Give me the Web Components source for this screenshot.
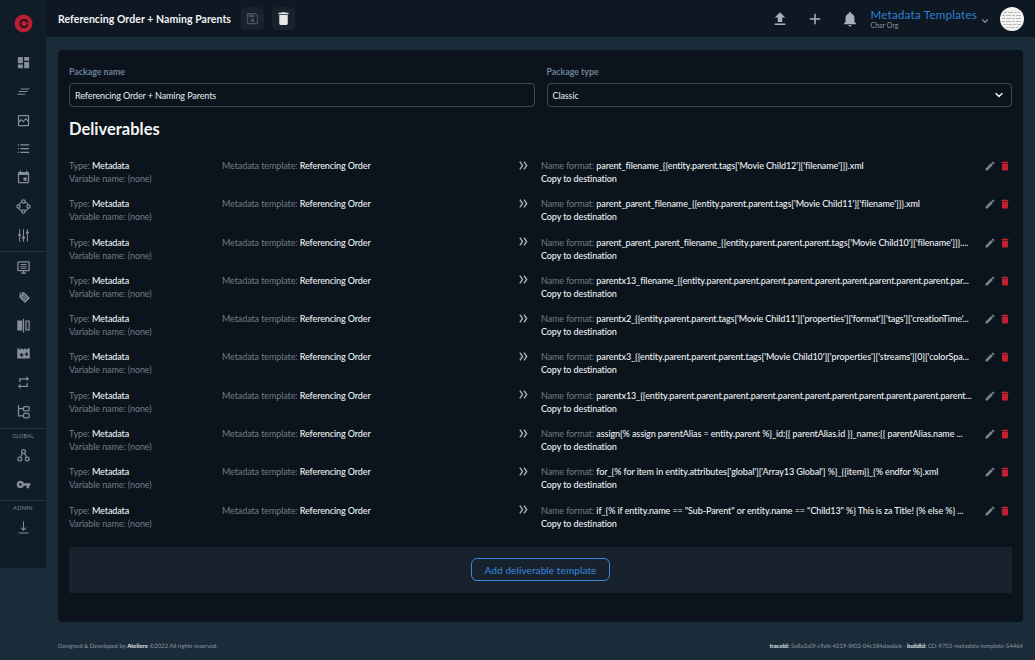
<!DOCTYPE html>
<html lang="en">
<head>
<meta charset="utf-8">
<title>Referencing Order + Naming Parents</title>
<style>
  html, body { margin: 0; height: 660px; overflow: hidden; background: #1a2b39; }
  body { font-family: "Lato", "Noto Sans", sans-serif; }
</style>
</head>
<body>
<app-shell>
  <side-nav slot="nav"></side-nav>
  <top-bar slot="top" title="Referencing Order + Naming Parents"></top-bar>
  <package-page></package-page>
  <page-footer slot="footer"></page-footer>
</app-shell>

<script>
const line = 'fill="none" stroke="currentColor" stroke-width="2"';
const icons = {
  dashboard: '<path d="M3 3h8v10H3zM13 3h8v6h-8zM13 11h8v10h-8zM3 15h8v6H3z"/>',
  stack: '<path d="M8 7h14l-1.2 1.6H6.6zM5 11.2h14l-1.2 1.6H3.6zM3 15.4h12l-1.2 1.6H1.6z"/>',
  image: '<path d="M19 3H5a2 2 0 0 0-2 2v14a2 2 0 0 0 2 2h14a2 2 0 0 0 2-2V5a2 2 0 0 0-2-2zm0 16H5v-3.6l3.5-3.4 3.5 3 3.5-4.5 3.5 3.6zm0-7.7-3.6-3.6-3.6 4.6-3.4-2.9L5 12.5V5h14z"/>',
  list: '<path d="M3 5h2v2H3zM7 5h14v2H7zM3 11h2v2H3zM7 11h14v2H7zM3 17h2v2H3zM7 17h14v2H7z"/>',
  event: '<path d="M17 12h-5v5h5v-5zM16 1v2H8V1H6v2H5c-1.11 0-1.99.9-1.99 2L3 19c0 1.1.89 2 2 2h14c1.1 0 2-.9 2-2V5c0-1.1-.9-2-2-2h-1V1h-2zm3 18H5V8h14v11z"/>',
  nodes: `<g ${line}><circle cx="12" cy="12" r="7.5"/></g><g stroke="currentColor" stroke-width="2" fill="#101c27"><circle cx="12" cy="4" r="2.6"/><circle cx="12" cy="20" r="2.6"/><circle cx="4" cy="12" r="2.6"/><circle cx="20" cy="12" r="2.6"/></g>`,
  tune: '<path d="M5 2h1.6v8H8v2.6H6.6V22H5v-9.4H3.4V10H5zM11.2 2h1.6v12h1.6v2.6h-1.6V22h-1.6v-5.4H9.6V14h1.6zM17.4 2H19v4h1.6v2.6H19V22h-1.6V8.6h-1.6V6h1.6z"/>',
  monitor: '<path fill-rule="evenodd" d="M20 2H4a2 2 0 0 0-2 2v12a2 2 0 0 0 2 2h7v2H8v2h8v-2h-3v-2h7a2 2 0 0 0 2-2V4a2 2 0 0 0-2-2zm0 14H4V4h16zM7 6.5h10v1.4H7zM7 9.5h10v1.4H7zM7 12.5h10v1.4H7z"/>',
  tag: '<path fill-rule="evenodd" transform="rotate(45 12 12)" d="M3.5 12 8 6.5h13v11H8zM7.3 10.8a1.3 1.3 0 1 0 0 2.4 1.3 1.3 0 0 0 0-2.4zM11 8.5v7h1v-7zM14 8.5v7h1v-7zM17 8.5v7h1v-7z"/>',
  compare: '<path fill-rule="evenodd" d="M2 4h8v16H2zM11 1h2v22h-2zM15 4h7v16h-7zm2 2v12h3V6z"/>',
  movie: '<path fill-rule="evenodd" d="M2 4h3l1.5 2.5L8 4h2l1.5 2.5L13 4h2l1.5 2.5L18 4h4v16H2zm6 7v2H6v2h2v2h2v-2h2v-2h-2v-2zm8-1v2h-2v2h2v2h2v-2h1v-2h-1v-2z"/>',
  repeat: '<path d="M7 7h10v3l4-4-4-4v3H5v6h2V7zm10 10H7v-3l-4 4 4 4v-3h12v-6h-2v4z"/>',
  tree: `<g ${line}><path d="M4 2v17h8M4 7.5h8"/><rect x="12" y="4" width="9" height="7" rx="2"/><rect x="12" y="15" width="9" height="7" rx="2"/></g>`,
  hub: `<g ${line}><path d="M10.5 8.5 7.5 14M13.5 8.5l3 5.5"/><circle cx="12" cy="5.5" r="3"/><circle cx="6" cy="17.5" r="3"/><circle cx="18" cy="17.5" r="3"/></g>`,
  key: '<path d="M12.65 10C11.83 7.67 9.61 6 7 6c-3.31 0-6 2.69-6 6s2.69 6 6 6c2.61 0 4.83-1.67 5.65-4H17v4h4v-4h2v-4H12.65zM7 14c-1.1 0-2-.9-2-2s.9-2 2-2 2 .9 2 2-.9 2-2 2z"/>',
  download: '<path d="M11.2 2h1.6v12.4l2.8-2.8 1.1 1.1-4.7 4.7-4.7-4.7 1.1-1.1 2.8 2.8zM4 20h16v1.6H4z"/>',
  upload: '<path d="M9 16h6v-6h4l-7-7-7 7h4zm-4 2h14v2H5z"/>',
  add: '<path d="M19 13h-6v6h-2v-6H5v-2h6V5h2v6h6v2z"/>',
  bell: '<path d="M12 22c1.1 0 2-.9 2-2h-4c0 1.1.9 2 2 2zm6-6v-5c0-3.07-1.63-5.64-4.5-6.32V4c0-.83-.67-1.5-1.5-1.5s-1.5.67-1.5 1.5v.68C7.64 5.36 6 7.92 6 11v5l-2 2v1h16v-1l-2-2z"/>',
  save: '<path d="M17 3H5c-1.11 0-2 .9-2 2v14c0 1.1.89 2 2 2h14c1.1 0 2-.9 2-2V7l-4-4zm2 16H5V5h11.17L19 7.83V19zm-7-7c-1.66 0-3 1.34-3 3s1.34 3 3 3 3-1.34 3-3-1.34-3-3-3zM6 6h9v4H6z"/>',
  trash: '<path d="M6 19c0 1.1.9 2 2 2h8c1.1 0 2-.9 2-2V7H6v12zM19 4h-3.5l-1-1h-5l-1 1H5v2h14V4z"/>',
  edit: '<path d="M3 17.25V21h3.75L17.81 9.94l-3.75-3.75L3 17.25zM20.71 7.04c.39-.39.39-1.02 0-1.41l-2.34-2.34c-.39-.39-1.02-.39-1.41 0l-1.83 1.83 3.75 3.75 1.83-1.83z"/>',
  chevron: '<path d="M6 9l6 6 6-6" fill="none" stroke="currentColor" stroke-width="2.6" stroke-linecap="round" stroke-linejoin="round"/>',
  arrows: '<path d="M4 3.5l6 8.5-6 8.5M13 3.5l6 8.5-6 8.5" fill="none" stroke="currentColor" stroke-width="3"/>'
};

class UiIcon extends HTMLElement {
  connectedCallback() {
    const size = this.getAttribute('size') || 16;
    const root = this.shadowRoot || this.attachShadow({ mode: 'open' });
    root.innerHTML = `
      <style>
        :host { display: inline-flex; width: ${size}px; height: ${size}px; color: inherit; }
        svg { width: 100%; height: 100%; fill: currentColor; display: block; }
      </style>
      <svg viewBox="0 0 24 24">${icons[this.getAttribute('name')] || ''}</svg>
    `;
  }
}
customElements.define('ui-icon', UiIcon);

const shellTemplate = document.createElement('template');
shellTemplate.innerHTML = `
  <style>
    :host { display: grid; grid-template-columns: 46px 1fr; width: 1035px; height: 660px; }
    .nav { align-self: start; }
    .main { display: flex; flex-direction: column; height: 660px; min-width: 0; }
    .content { flex: 1; min-height: 0; padding: 13px 12px 0; }
  </style>
  <div class="nav"><slot name="nav"></slot></div>
  <div class="main">
    <slot name="top"></slot>
    <div class="content"><slot></slot></div>
    <slot name="footer"></slot>
  </div>
`;
class AppShell extends HTMLElement {
  constructor() {
    super();
    this.attachShadow({ mode: 'open' }).appendChild(shellTemplate.content.cloneNode(true));
  }
}
customElements.define('app-shell', AppShell);

const navTemplate = document.createElement('template');
navTemplate.innerHTML = `
  <style>
    :host { display: flex; flex-direction: column; align-items: stretch; width: 46px; height: 568px; background: #101c27; color: #848e98; }
    .logo { height: 46px; display: flex; align-items: center; justify-content: center; }
    .items { display: flex; flex-direction: column; align-items: center; }
    .item { height: 28.85px; width: 100%; display: flex; align-items: center; justify-content: center; }
    .first { padding-top: 2px; }
    hr { width: 100%; height: 1px; margin: 1.5px 0; border: 0; background: #26333f; }
    hr.low { margin-top: 2.5px; }
    .label { font-size: 5.5px; line-height: 9px; height: 9px; text-align: center; color: #7f8a94; letter-spacing: 0.1px; margin-top: 1px; }
    #b { margin-top: -1px; }
  </style>
  <div class="logo">
    <svg width="19" height="19" viewBox="0 0 19 19">
      <circle cx="9.5" cy="9.5" r="9" fill="#b81f32"/>
      <circle cx="10" cy="9.5" r="3.6" fill="none" stroke="#1a0f16" stroke-width="1.8"/>
      <rect x="13" y="8.7" width="4.5" height="1.6" fill="#b81f32"/>
    </svg>
  </div>
  <div class="items first" id="a"></div>
  <hr>
  <div class="items" id="b"></div>
  <hr class="low">
  <div class="label">GLOBAL</div>
  <div class="items" id="c"></div>
  <hr>
  <div class="label">ADMIN</div>
  <div class="items" id="d"></div>
`;
class SideNav extends HTMLElement {
  constructor() {
    super();
    const root = this.attachShadow({ mode: 'open' });
    root.appendChild(navTemplate.content.cloneNode(true));
    const groups = {
      a: ['dashboard', 'stack', 'image', 'list', 'event', 'nodes', 'tune'],
      b: ['monitor', 'tag', 'compare', 'movie', 'repeat', 'tree'],
      c: ['hub', 'key'],
      d: ['download']
    };
    for (const id in groups) {
      root.getElementById(id).innerHTML = groups[id]
        .map(n => `<div class="item"><ui-icon name="${n}" size="15"></ui-icon></div>`).join('');
    }
  }
}
customElements.define('side-nav', SideNav);

const topTemplate = document.createElement('template');
topTemplate.innerHTML = `
  <style>
    :host { display: flex; align-items: center; height: 37px; flex: none; background: #0e1822; padding: 0 11px 0 12px; color: #fff; }
    h1 { margin: 0; font-size: 10.5px; letter-spacing: 0.06px; font-weight: 700; color: #f1f3f5; white-space: nowrap; width: 173px; }
    .square { width: 23px; height: 23px; border-radius: 5px; background: #18222c; display: flex; align-items: center; justify-content: center; }
    .save { color: #44505b; margin-left: 10px; }
    .del { color: #e6e8ea; margin-left: 8px; }
    .spacer { flex: 1; }
    .act { color: #a8b2bd; display: flex; margin-left: 17px; }
    .org { margin-left: 11px; display: flex; flex-direction: column; }
    .org b { font-weight: 400; font-size: 11.6px; letter-spacing: 0.22px; line-height: 13px; color: #2f80d8; white-space: nowrap; }
    .org span { font-size: 7px; line-height: 9px; color: #8a949e; }
    .caret { color: #8a949e; margin: 4px 10px 0 3px; display: flex; }
    .avatar { width: 24px; height: 24px; border-radius: 50%; background: #f2f2f0; overflow: hidden; display: flex; }
  </style>
  <h1></h1>
  <div class="square save"><ui-icon name="save" size="15"></ui-icon></div>
  <div class="square del"><ui-icon name="trash" size="17"></ui-icon></div>
  <div class="spacer"></div>
  <div class="act"><ui-icon name="upload" size="18"></ui-icon></div>
  <div class="act"><ui-icon name="add" size="18"></ui-icon></div>
  <div class="act"><ui-icon name="bell" size="18"></ui-icon></div>
  <div class="org"><b>Metadata Templates</b><span>Char Org</span></div>
  <div class="caret"><ui-icon name="chevron" size="10"></ui-icon></div>
  <div class="avatar">
    <svg width="24" height="24" viewBox="0 0 24 24" stroke="#b9b9b7" stroke-width="1" stroke-dasharray="3 1 5 1">
      <path d="M4 5.5h16M2 8.5h20M2 11.5h20M2 14.5h20M3 17.5h18M6 20.5h12"/>
    </svg>
  </div>
`;
class TopBar extends HTMLElement {
  constructor() {
    super();
    const root = this.attachShadow({ mode: 'open' });
    root.appendChild(topTemplate.content.cloneNode(true));
    root.querySelector('h1').textContent = this.getAttribute('title');
  }
}
customElements.define('top-bar', TopBar);

const fieldTemplate = document.createElement('template');
fieldTemplate.innerHTML = `
  <style>
    :host { display: block; min-width: 0; }
    label { display: block; font-size: 8.8px; line-height: 12px; font-weight: 700; color: #6d8299; margin-bottom: 5px; }
    .box { height: 22px; border: 1px solid #3c4b59; border-radius: 4px; display: flex; align-items: center; justify-content: space-between; padding: 0 5px; color: #e8ebee; font-size: 9px; letter-spacing: -0.1px; }
    .chev { color: #fff; display: flex; margin-right: 1px; }
  </style>
  <label></label>
  <div class="box"><span><slot></slot></span><span class="chev"></span></div>
`;
class PackageField extends HTMLElement {
  constructor() {
    super();
    const root = this.attachShadow({ mode: 'open' });
    root.appendChild(fieldTemplate.content.cloneNode(true));
    root.querySelector('label').textContent = this.getAttribute('label');
    if (this.hasAttribute('select')) {
      root.querySelector('.chev').innerHTML = '<ui-icon name="chevron" size="12"></ui-icon>';
    }
  }
}
customElements.define('package-field', PackageField);

const rowTemplate = document.createElement('template');
rowTemplate.innerHTML = `
  <style>
    :host { display: grid; grid-template-columns: 153px 296px 23px 1fr 37px; height: 38.3px; box-sizing: border-box; border-bottom: 1px solid #2a353f; font-size: 9px; letter-spacing: -0.1px; line-height: 13px; color: #727b84; padding-top: 6px; }
    b { font-weight: 500; color: #eef1f3; }
    .white { color: #eef1f3; font-weight: 500; }
    .arrows { color: #a9b1b9; display: flex; height: 12px; align-items: center; }
    .name { white-space: nowrap; overflow: hidden; min-width: 0; }
    .tools { display: flex; justify-content: flex-end; gap: 3px; padding: 1px 1px 0 0; align-items: flex-start; }
    .edit { color: #78838e; }
    .del { color: #c0202f; }
  </style>
  <div>Type: <b>Metadata</b><br>Variable name: (none)</div>
  <div>Metadata template: <b>Referencing Order</b></div>
  <div class="arrows"><ui-icon name="arrows" size="11"></ui-icon></div>
  <div style="min-width:0">
    <div class="name">Name format: <b id="format"></b></div>
    <div class="white">Copy to destination</div>
  </div>
  <div class="tools">
    <span class="edit"><ui-icon name="edit" size="12"></ui-icon></span>
    <span class="del"><ui-icon name="trash" size="12"></ui-icon></span>
  </div>
`;
class DeliverableRow extends HTMLElement {
  constructor() {
    super();
    this.attachShadow({ mode: 'open' }).appendChild(rowTemplate.content.cloneNode(true));
  }
  connectedCallback() {
    this.shadowRoot.getElementById('format').textContent = this.getAttribute('format');
    if (!this.nextElementSibling) this.style.borderBottom = '0';
  }
}
customElements.define('deliverable-row', DeliverableRow);

// long formats are shortened the way the list shows them
const formats = [
  "parent_filename_{{entity.parent.tags['Movie Child12']['filename']}}.xml",
  "parent_parent_filename_{{entity.parent.parent.tags['Movie Child11']['filename']}}.xml",
  "parent_parent_parent_filename_{{entity.parent.parent.parent.tags['Movie Child10']['filename']}}....",
  "parentx13_filename_{{entity" + '.parent'.repeat(9) + ".par...",
  "parentx2_{{entity.parent.parent.tags['Movie Child11']['properties']['format']['tags']['creationTime'...",
  "parentx3_{{entity.parent.parent.parent.tags['Movie Child10']['properties']['streams'][0]['colorSpa...",
  "parentx13_{{entity" + '.parent'.repeat(11) + "...",
  "assign{% assign parentAlias = entity.parent %}_id:{{ parentAlias.id }}_name:{{ parentAlias.name ...",
  "for_{% for item in entity.attributes['global']['Array13 Global'] %}_{{item}}_{% endfor %}.xml",
  'if_{% if entity.name == "Sub-Parent" or entity.name == "Child13" %} This is za Title! {% else %} ...'
];

const pageTemplate = document.createElement('template');
pageTemplate.innerHTML = `
  <style>
    :host { display: block; box-sizing: border-box; height: 572px; background: #0b141c; border-radius: 4px; padding: 16px 11px 0; }
    .fields { display: grid; grid-template-columns: 1fr 1fr; gap: 12px; }
    h2 { margin: 11px 0 13px; font-size: 16.5px; line-height: 22px; font-weight: 700; color: #f4f5f6; }
    .add { margin-top: 11px; height: 46px; background: #17222c; display: flex; align-items: center; justify-content: center; }
    .btn { height: 23px; box-sizing: border-box; width: 139px; border: 1px solid #3a8ae0; border-radius: 6px; color: #3a8ae0; font-size: 10px; letter-spacing: 0.1px; display: flex; align-items: center; justify-content: center; }
  </style>
  <div class="fields">
    <package-field label="Package name">Referencing Order + Naming Parents</package-field>
    <package-field label="Package type" select>Classic</package-field>
  </div>
  <h2>Deliverables</h2>
  <div id="rows"></div>
  <div class="add"><div class="btn">Add deliverable template</div></div>
`;
class PackagePage extends HTMLElement {
  constructor() {
    super();
    const root = this.attachShadow({ mode: 'open' });
    root.appendChild(pageTemplate.content.cloneNode(true));
    const rows = root.getElementById('rows');
    formats.forEach(f => {
      const row = document.createElement('deliverable-row');
      row.setAttribute('format', f);
      rows.appendChild(row);
    });
  }
}
customElements.define('package-page', PackagePage);

const footerTemplate = document.createElement('template');
footerTemplate.innerHTML = `
  <style>
    :host { display: flex; justify-content: space-between; align-items: center; flex: none; height: 37px; padding: 10px 12px 0; box-sizing: border-box; font-size: 5.95px; text-rendering: geometricPrecision; color: #8d979f; }
    b { color: #dfe3e6; }
    .trace { letter-spacing: -0.02px; }
  </style>
  <div>Designed &amp; Developed by <b>Ateliere</b> ©2022 All rights reserved.</div>
  <div class="trace"><b>traceId:</b> 5e8a3a0f-c9eb-4319-8f03-04c584daa6eb - <b>buildId:</b> CD-9703-metadata-template-54464</div>
`;
class PageFooter extends HTMLElement {
  constructor() {
    super();
    this.attachShadow({ mode: 'open' }).appendChild(footerTemplate.content.cloneNode(true));
  }
}
customElements.define('page-footer', PageFooter);
</script>
</body>
</html>
